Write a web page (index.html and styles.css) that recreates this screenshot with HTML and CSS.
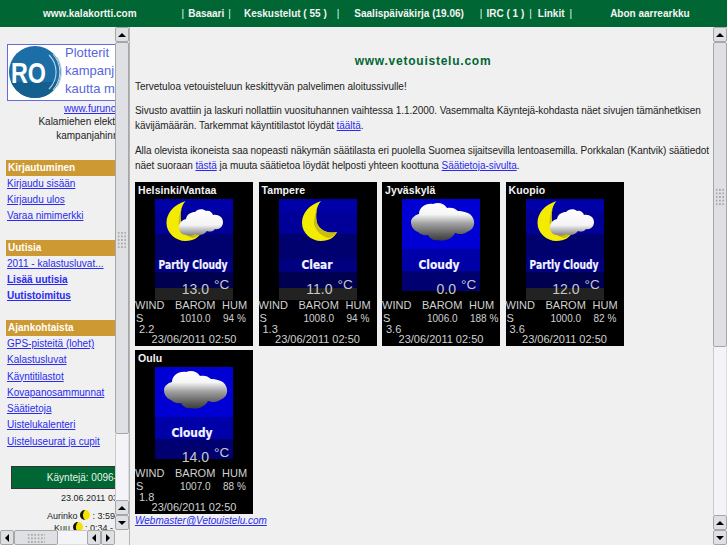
FILE: index.html
```html
<!DOCTYPE html>
<html lang="fi">
<head>
<meta charset="utf-8">
<title>www.vetouistelu.com</title>
<link rel="stylesheet" href="styles.css">
</head>
<body>
<svg class="sprites" width="0" height="0" aria-hidden="true">
  <defs>
    <linearGradient id="cloudA" x1="0" y1="0" x2="0" y2="1">
      <stop offset="0" stop-color="#ffffff"/><stop offset=".6" stop-color="#f4f4f4"/><stop offset="1" stop-color="#808080"/>
    </linearGradient>
    <linearGradient id="cloudB" x1="0" y1="0" x2="0" y2="1">
      <stop offset="0" stop-color="#ffffff"/><stop offset=".3" stop-color="#f6f6f6"/><stop offset=".55" stop-color="#a0a0a0"/><stop offset=".85" stop-color="#5a5a5a"/><stop offset="1" stop-color="#3c3c3c"/>
    </linearGradient>
    <symbol id="night" viewBox="0 0 78 101">
      <rect width="78" height="12" fill="#0000a8"/>
      <rect y="12" width="78" height="23" fill="#000099"/>
      <rect y="35" width="78" height="25" fill="#00006e"/>
      <rect y="60" width="78" height="13" fill="#000080"/>
      <rect y="73" width="78" height="16" fill="#000050"/>
      <rect y="89" width="78" height="12" fill="#222222"/>
    </symbol>
    <symbol id="day" viewBox="0 0 78 101">
      <rect width="78" height="50" fill="#0000d4"/>
      <rect y="50" width="78" height="22" fill="#0000a8"/>
      <rect y="72" width="78" height="20" fill="#000070"/>
      <rect y="92" width="78" height="9" fill="#000000"/>
    </symbol>
    <symbol id="moon" viewBox="0 0 78 101">
      <path d="M42 2C30 6 23 14 23 24C23 34 32 42 42 42C50 42 56 38 58 33C50 35 41 32 38 24C36 16 37 8 42 2Z" fill="#f4ec00"/>
      <path d="M38 24C41 32 50 35 58 33C56 36 53 38 50 39C44 38 37 33 35 25C35 20 36 14 38 10C37 15 37 20 38 24Z" fill="#c8bc10"/>
    </symbol>
    <symbol id="cloud-small" viewBox="0 0 44 28">
      <path d="M7 27C2 27 0 23 0 19C0 15 3 12 7 11C8 6 12 4 16 4C18 1 24 0 27 3C30 2 33 4 34 7C39 6 44 9 44 14C44 19 40 22 36 21C34 24 30 24 28 23C25 27 20 28 16 26C13 28 10 28 7 27Z" fill="url(#cloudA)"/>
    </symbol>
    <symbol id="cloud-big" viewBox="0 0 64 38">
      <path d="M7 29C2 27 0 23 0 19C0 15 4 12 8 11C8 5 14 0 22 1C27 -1 33 0 36 5C40 4 44 5 47 8C53 8 60 10 62 15C65 21 62 27 56 29C52 32 47 31 44 30C41 36 33 39 27 37C23 38 19 36 17 32C13 33 9 31 7 29Z" fill="url(#cloudB)"/>
    </symbol>
    <symbol id="phase-icon" viewBox="0 0 10 10">
      <circle cx="5" cy="5" r="5" fill="#f2e200"/>
      <path d="M5 0A5 5 0 0 0 5 10A7 7 0 0 1 5 0Z" fill="#111"/>
    </symbol>
  </defs>
</svg>

<div class="app">
  <header class="topbar">
    <span class="t-site">www.kalakortti.com</span>
    <span class="t-bar t-a">|</span><span class="t-basaari">Basaari</span><span class="t-bar t-b">|</span>
    <span class="t-forum">Keskustelut ( 55 )</span><span class="t-bar t-c">|</span>
    <span class="t-log">Saalispäiväkirja (19.06)</span><span class="t-bar t-d">|</span>
    <span class="t-irc">IRC ( 1 )</span><span class="t-bar t-e">|</span>
    <span class="t-links">Linkit</span><span class="t-bar t-f">|</span>
    <span class="t-abon">Abon aarrearkku</span>
  </header>

  <div class="frames">
    <aside class="left">
      <div class="left-clip">
        <div class="left-inner">
          <a class="ad" href="#">
            <svg class="ad-logo" width="54" height="52" viewBox="0 0 54 52" aria-hidden="true">
              <circle cx="26" cy="26" r="26" fill="#1b6fa6"/>
              <path d="M2 36A26 26 0 0 0 50 36Z" fill="#145e90"/>
              <g fill="none" stroke="#bcd4e6" stroke-width="1.1">
                <path d="M40 9A24 24 0 0 1 40 43"/>
                <path d="M44 8A27 27 0 0 1 44 44"/>
                <path d="M48 11A28 28 0 0 1 48 41"/>
              </g>
              <text class="ad-ro" x="2" y="37" textLength="35" lengthAdjust="spacingAndGlyphs">RO</text>
            </svg>
            <span class="ad-text">Plotterit<br>kampanj<br>kautta m</span>
          </a>
          <a class="ad-url" href="#">www.furuno.fi</a>
          <p class="ad-copy">Kalamiehen elektroniikka<br>kampanjahinnoin</p>

          <h2 class="sec sec-first">Kirjautuminen</h2>
          <ul class="nav">
            <li><a href="#">Kirjaudu sisään</a></li>
            <li><a href="#">Kirjaudu ulos</a></li>
            <li><a href="#">Varaa nimimerkki</a></li>
          </ul>
          <h2 class="sec">Uutisia</h2>
          <ul class="nav">
            <li><a href="#">2011 - kalastusluvat...</a></li>
            <li><a class="strong" href="#">Lisää uutisia</a></li>
            <li><a class="strong" href="#">Uutistoimitus</a></li>
          </ul>
          <h2 class="sec">Ajankohtaista</h2>
          <ul class="nav nav-long">
            <li><a href="#">GPS-pisteitä (lohet)</a></li>
            <li><a href="#">Kalastusluvat</a></li>
            <li><a href="#">Käyntitilastot</a></li>
            <li><a href="#">Kovapanosammunnat</a></li>
            <li><a href="#">Säätietoja</a></li>
            <li><a href="#">Uistelukalenteri</a></li>
            <li><a href="#">Uisteluseurat ja cupit</a></li>
          </ul>
          <div class="counter">Käyntejä: 0096-4127</div>
          <div class="stamp">23.06.2011 03:14</div>
          <div class="astro astro-sun">Aurinko <svg class="phase" width="10" height="10" aria-hidden="true"><use href="#phase-icon"/></svg> : 3:59 - 22:51</div>
          <div class="astro astro-moon">Kuu <svg class="phase" width="10" height="10" aria-hidden="true"><use href="#phase-icon"/></svg> : 0:34 - 14:20</div>
        </div>
      </div>
      <div class="vbar">
        <button class="sb up"></button>
        <div class="thumb v thumb-left"><i class="grip"></i></div>
        <div class="track"></div>
        <button class="sb up"></button>
        <button class="sb down"></button>
      </div>
      <div class="hbar">
        <button class="sb lf"></button>
        <div class="thumb h"><i class="grip"></i></div>
        <div class="track"></div>
        <button class="sb lf"></button>
        <button class="sb rt"></button>
      </div>
    </aside>

    <main class="right">
      <div class="content">
        <h1 class="title">www.vetouistelu.com</h1>
        <p>Tervetuloa vetouisteluun keskittyvän palvelimen aloitussivulle!</p>
        <p class="tight">Sivusto avattiin ja laskuri nollattiin vuosituhannen vaihtessa 1.1.2000. Vasemmalta Käyntejä-kohdasta näet sivujen tämänhetkisen<br>kävijämäärän. Tarkemmat käyntitilastot löydät <a href="#">täältä</a>.</p>
        <p class="tight">Alla olevista ikoneista saa nopeasti näkymän säätilasta eri puolella Suomea sijaitsevilla lentoasemilla. Porkkalan (Kantvik) säätiedot<br>näet suoraan <a href="#">tästä</a> ja muuta säätietoa löydät helposti yhteen koottuna <a href="#">Säätietoja-sivulta</a>.</p>

        <div class="cards">
          <article class="card">
            <h3>Helsinki/Vantaa</h3>
            <div class="panel">
              <svg width="78" height="101" viewBox="0 0 78 101">
                <use href="#night"/><use href="#moon" x="-11.5" y="0"/><use href="#cloud-small" x="24" y="9" width="44" height="28"/>
                <text class="cond" x="38" y="70" textLength="69" lengthAdjust="spacingAndGlyphs">Partly Cloudy</text>
              </svg>
              <span class="temp">13.0</span><span class="deg">°C</span>
            </div>
            <div class="stats"><span>WIND</span><span>BAROM</span><span>HUM</span><span class="w">S</span><span class="val">1010.0</span><span class="val">94 %</span></div>
            <div class="speed">2.2</div>
            <div class="time">23/06/2011 02:50</div>
          </article>
          <article class="card">
            <h3>Tampere</h3>
            <div class="panel">
              <svg width="78" height="101" viewBox="0 0 78 101">
                <use href="#night"/><use href="#moon"/>
                <text class="cond" x="38" y="70" textLength="31" lengthAdjust="spacingAndGlyphs">Clear</text>
              </svg>
              <span class="temp">11.0</span><span class="deg">°C</span>
            </div>
            <div class="stats"><span>WIND</span><span>BAROM</span><span>HUM</span><span class="w">S</span><span class="val">1008.0</span><span class="val">94 %</span></div>
            <div class="speed">1.3</div>
            <div class="time">23/06/2011 02:50</div>
          </article>
          <article class="card">
            <h3>Jyväskylä</h3>
            <div class="panel">
              <svg width="78" height="101" viewBox="0 0 78 101">
                <use href="#day"/><use href="#cloud-big" x="9" y="4" width="64" height="38"/>
                <text class="cond" x="37" y="70" textLength="41" lengthAdjust="spacingAndGlyphs">Cloudy</text>
              </svg>
              <span class="temp">0.0</span><span class="deg">°C</span>
            </div>
            <div class="stats"><span>WIND</span><span>BAROM</span><span>HUM</span><span class="w">S</span><span class="val">1006.0</span><span class="val">188 %</span></div>
            <div class="speed">3.6</div>
            <div class="time">23/06/2011 02:50</div>
          </article>
          <article class="card">
            <h3>Kuopio</h3>
            <div class="panel">
              <svg width="78" height="101" viewBox="0 0 78 101">
                <use href="#night"/><use href="#moon" x="-11.5" y="0"/><use href="#cloud-small" x="24" y="9" width="44" height="28"/>
                <text class="cond" x="38" y="70" textLength="69" lengthAdjust="spacingAndGlyphs">Partly Cloudy</text>
              </svg>
              <span class="temp">12.0</span><span class="deg">°C</span>
            </div>
            <div class="stats"><span>WIND</span><span>BAROM</span><span>HUM</span><span class="w">S</span><span class="val">1000.0</span><span class="val">82 %</span></div>
            <div class="speed">3.6</div>
            <div class="time">23/06/2011 02:50</div>
          </article>
          <article class="card">
            <h3>Oulu</h3>
            <div class="panel">
              <svg width="78" height="101" viewBox="0 0 78 101">
                <use href="#day"/><use href="#cloud-big" x="9" y="4" width="64" height="38"/>
                <text class="cond" x="37" y="70" textLength="41" lengthAdjust="spacingAndGlyphs">Cloudy</text>
              </svg>
              <span class="temp">14.0</span><span class="deg">°C</span>
            </div>
            <div class="stats"><span>WIND</span><span>BAROM</span><span>HUM</span><span class="w">S</span><span class="val">1007.0</span><span class="val">88 %</span></div>
            <div class="speed">1.8</div>
            <div class="time">23/06/2011 02:50</div>
          </article>
        </div>
        <a class="webmaster" href="#">Webmaster@Vetouistelu.com</a>
      </div>
      <div class="vbar">
        <button class="sb up"></button>
        <div class="thumb v thumb-right"><i class="grip"></i></div>
        <div class="track"></div>
        <button class="sb up"></button>
        <button class="sb down"></button>
      </div>
    </main>
  </div>
</div>
</body>
</html>
```

FILE: styles.css
```css
* { box-sizing: border-box; }
html, body { margin: 0; height: 100%; overflow: hidden; }
body { background: #f0f0f0; color: #222; font-family: "Liberation Sans", Arial, sans-serif; font-size: 10px; }
.sprites { position: absolute; }
.app { display: flex; flex-direction: column; height: 100vh; }
a { color: #2a2af0; }

/* top bar */
.topbar { flex: 0 0 27px; height: 27px; background: #006633; color: #f4f4f4; font-weight: bold; font-size: 10px; display: flex; align-items: center; padding-left: 43px; white-space: nowrap; }
.t-bar { font-weight: normal; color: #dfe; }
.t-a { margin-left: 45px; }
.t-basaari { margin-left: 4px; }
.t-b { margin-left: 4px; }
.t-forum { margin-left: 13px; }
.t-c { margin-left: 10px; }
.t-log { margin-left: 15px; }
.t-d { margin-left: 16px; }
.t-irc { margin-left: 4px; }
.t-e { margin-left: 5px; }
.t-links { margin-left: 6px; }
.t-f { margin-left: 5px; }
.t-abon { margin-left: 38px; }

.frames { flex: 1; min-height: 0; display: flex; }

/* left frame */
.left { flex: 0 0 130px; display: grid; grid-template-columns: 115px 14px; grid-template-rows: 1fr 15px; border-right: 1px solid #b4b4b4; min-height: 0; }
.left-clip { overflow: hidden; min-height: 0; }
.left-inner { width: 190px; padding: 17px 0 0 6px; }
.ad { display: flex; width: 170px; height: 57px; margin-left: 1px; background: #fff; border: 1px solid #6a6ae0; padding: 1px; text-decoration: none; color: #5566dd; }
.ad-logo { flex: none; }
.ad-ro { font: bold 30px "Liberation Sans", sans-serif; fill: #fff; }
.ad-text { font-size: 13px; line-height: 18px; margin: -2px 0 0 2px; }
.ad-url { display: block; width: 176px; text-align: center; margin-top: 1px; font-size: 10px; line-height: 13px; }
.ad-copy { width: 176px; margin: 0; text-align: center; font-size: 10px; line-height: 14px; }
.sec { margin: 16px 0 0; height: 16px; width: 170px; background: #cc9933; color: #fff; font-size: 10px; font-weight: bold; line-height: 16px; padding-left: 2px; }
.sec-first { margin-top: 17px; }
.nav { list-style: none; margin: 0; padding: 0 0 0 1px; }
.nav li { height: 16px; line-height: 16px; }
.nav-long li { height: 16.3px; }
.nav a { font-size: 10px; }
.nav a.strong { font-weight: bold; }
.counter { width: 170px; height: 23px; margin: 16px 0 0 5px; background: #006633; border: 1px solid #333; color: #e8f4ec; line-height: 21px; text-align: center; font-size: 10px; padding-right: 6px; }
.stamp { margin: 3px 0 0 55px; line-height: 13px; font-size: 9px; }
.astro { font-size: 9px; line-height: 12px; }
.astro-sun { margin: 5px 0 0 41px; }
.astro-moon { margin: 0 0 0 48px; }
.phase { vertical-align: -1px; }

/* scrollbars */
.vbar { display: flex; flex-direction: column; width: 14px; min-height: 0; }
.left .vbar { grid-row: 1; grid-column: 2; }
.right .vbar { flex: 0 0 14px; }
.hbar { grid-row: 2; grid-column: 1; display: flex; height: 15px; }
.track { flex: 1; background: #f4f4f8; border-left: 1px solid #c8c8c8; border-right: 1px solid #dedede; }
.hbar .track { border: 0; border-top: 1px solid #c8c8c8; border-bottom: 1px solid #dedede; }
.sb { flex: 0 0 15px; width: 14px; height: 15px; padding: 0; background: #dfe0e4; border: 1px solid #a6a6a6; border-radius: 2px; position: relative; }
.hbar .sb { flex-basis: 14px; }
.sb::after { content: ""; position: absolute; left: 50%; top: 50%; width: 0; height: 0; border: 4px solid transparent; }
.up::after { border-bottom-color: #000; transform: translate(-50%, -75%); }
.down::after { border-top-color: #000; transform: translate(-50%, -25%); }
.lf::after { border-right-color: #000; transform: translate(-75%, -50%); }
.rt::after { border-left-color: #000; transform: translate(-25%, -50%); }
.thumb { background: #dfe0e4; border: 1px solid #a6a6a6; border-radius: 2px; display: flex; }
.thumb.v { width: 14px; justify-content: center; padding-top: 188px; }
.thumb-left { flex: 0 0 392px; }
.thumb-right { flex: 0 0 305px; padding-top: 145px !important; }
.thumb.h { flex: 0 0 44px; align-items: center; justify-content: center; }
.grip { display: block; width: 10px; height: 18px; background-image: radial-gradient(circle, #a8a8a8 0.8px, transparent 1px); background-size: 3.3px 3.6px; }
.thumb.h .grip { width: 18px; height: 10px; }

/* right frame */
.right { flex: 1; min-width: 0; display: flex; }
.content { flex: 1; min-width: 0; overflow: hidden; padding: 0 5px; font-size: 10px; line-height: 15px; }
.title { margin: 26px 0 0; text-align: center; color: #006633; font-size: 12px; line-height: 16px; font-weight: bold; letter-spacing: .76px; padding-left: 3px; }
.content p { margin: 9.5px 0 0; letter-spacing: -.02px; white-space: nowrap; }
.content p.tight { letter-spacing: -.06px; }
.cards { display: flex; flex-wrap: wrap; gap: 4px 5.5px; margin-top: 9.5px; }
.card { width: 118px; height: 164px; background: #000; color: #d0d0d0; font-size: 11px; line-height: 11px; position: relative; }
.card h3 { margin: 0; height: 17px; padding: 3px 0 0 3px; color: #f4f4f4; font-size: 10.5px; line-height: 11px; font-weight: bold; letter-spacing: .1px; }
.panel { position: relative; width: 78px; height: 101px; margin-left: 20px; }
.panel svg { display: block; }
.cond { font: bold 12px "DejaVu Sans", sans-serif; fill: #f4f4ff; stroke: #f4f4ff; stroke-width: .2px; text-anchor: middle; }
.temp { position: absolute; right: 24px; top: 82px; font-size: 14px; line-height: 16px; color: #c8c8c8; }
.deg { position: absolute; left: 59px; top: 79px; font-size: 13.5px; line-height: 14px; color: #c8c8c8; }
.stats { display: grid; grid-template-columns: 40px 47px 31px; grid-auto-rows: 13px; margin-top: -1px; white-space: nowrap; line-height: 13px; }
.val { font-size: 10px; }
.stats .val:nth-child(5) { padding-left: 5px; }
.stats .val:nth-child(6) { padding-left: 1px; }
.w { padding-left: 1px; }
.speed { padding-left: 4px; line-height: 10px; margin-top: -1px; font-size: 11px; }
.time { text-align: center; line-height: 11px; }
.webmaster { display: block; margin-top: 0; font-style: italic; line-height: 13px; font-size: 10px; }
```
